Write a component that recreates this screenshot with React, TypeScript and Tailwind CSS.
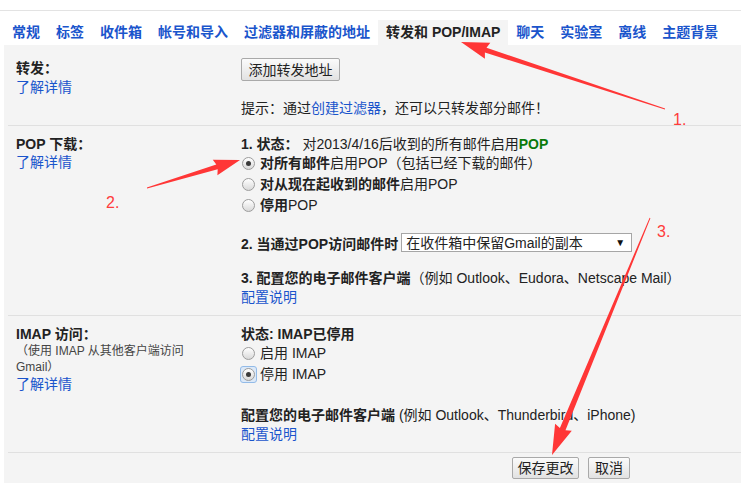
import React from "react";

function arrowPoints(x1: number, y1: number, x2: number, y2: number, neck: number, headW: number, headLen: number) {
  const dx = x2 - x1, dy = y2 - y1;
  const L = Math.sqrt(dx * dx + dy * dy);
  const ux = dx / L, uy = dy / L;
  const nx = -uy, ny = ux;
  const bx = x2 - ux * headLen, by = y2 - uy * headLen;
  const pts = [
    [x1 + nx * 0.4, y1 + ny * 0.4],
    [bx + (nx * neck) / 2, by + (ny * neck) / 2],
    [bx + (nx * headW) / 2 - ux * 2, by + (ny * headW) / 2 - uy * 2],
    [x2, y2],
    [bx - (nx * headW) / 2 - ux * 2, by - (ny * headW) / 2 - uy * 2],
    [bx - (nx * neck) / 2, by - (ny * neck) / 2],
    [x1 - nx * 0.4, y1 - ny * 0.4],
  ];
  return pts.map((p) => p[0].toFixed(1) + "," + p[1].toFixed(1)).join(" ");
}

function Radio({ checked }: { checked?: boolean }) {
  return (
    <span className="inline-flex w-[13px] h-[13px] rounded-full border border-[#9c9c9c] bg-gradient-to-b from-[#ffffff] to-[#d9d9d9] items-center justify-center shrink-0">
      {checked && <span className="w-[5px] h-[5px] rounded-full bg-[#3a3a3a]" />}
    </span>
  );
}

function Btn({ children, w, h }: { children: React.ReactNode; w: string; h: string }) {
  return (
    <div
      className={`${w} ${h} flex items-center justify-center rounded-[2px] border border-[#a9a9a9] bg-gradient-to-b from-[#fbfbfb] to-[#e2e2e2] text-[14px] text-[#222] leading-none`}
    >
      {children}
    </div>
  );
}

const Link = ({ children }: { children: React.ReactNode }) => <span className="text-[#1a55cc]">{children}</span>;

export default function App() {
  const tabs = ["常规", "标签", "收件箱", "帐号和导入", "过滤器和屏蔽的地址", "转发和 POP/IMAP", "聊天", "实验室", "离线", "主题背景"];
  return (
    <div className="relative w-[741px] h-[494px] overflow-hidden bg-white font-['Liberation_Sans','Noto_Sans_CJK_SC',sans-serif] text-[14px] text-[#222]">
      <div className="pt-[10px]">
        <div className="border-t border-[#e3e3e3]" />
        <div className="mt-[9px] flex h-[25px] pl-[4px]">
          {tabs.map((t, i) => (
            <div
              key={t}
              className={
                i === 5
                  ? "px-[8px] h-full flex items-center bg-[#f4f4f4] font-bold text-[#222] whitespace-nowrap"
                  : "px-[8px] h-full flex items-center font-bold text-[#1a55cc] whitespace-nowrap"
              }
            >
              {t}
            </div>
          ))}
        </div>
      </div>

      <div className="ml-[4px] w-[737px] h-[438px] bg-[#f4f4f4]">
        {/* 转发 */}
        <div className="flex h-[80px] pt-[13px]">
          <div className="w-[237px] pl-[12px]">
            <div className="leading-[20px] font-bold">转发：</div>
            <div className="leading-[18px]"><Link>了解详情</Link></div>
          </div>
          <div className="flex-1">
            <Btn w="w-[99px]" h="h-[23px]">添加转发地址</Btn>
            <div className="mt-[17px] leading-[20px]">
              提示：通过<Link>创建过滤器</Link>，还可以只转发部分邮件！
            </div>
          </div>
        </div>
        <div className="ml-[4px] border-t border-[#e0e0e0]" />

        {/* POP */}
        <div className="flex h-[189px] pt-[10px]">
          <div className="w-[237px] pl-[12px]">
            <div className="leading-[17px] font-bold">POP 下载：</div>
            <div className="leading-[18px]"><Link>了解详情</Link></div>
          </div>
          <div className="flex-1">
            <div className="leading-[17px] whitespace-nowrap">
              <span className="font-bold">1. 状态：</span> 对2013/4/16后收到的所有邮件启用<span className="font-bold text-[#0a7a0a]">POP</span>
            </div>
            <div className="flex items-center h-[21px] whitespace-nowrap">
              <span className="ml-[1px] mr-[5px] flex"><Radio checked /></span>
              <span className="font-bold">对所有邮件</span>启用POP（包括已经下载的邮件）
            </div>
            <div className="flex items-center h-[21px] whitespace-nowrap">
              <span className="ml-[1px] mr-[5px] flex"><Radio /></span>
              <span className="font-bold">对从现在起收到的邮件</span>启用POP
            </div>
            <div className="flex items-center h-[21px] whitespace-nowrap">
              <span className="ml-[1px] mr-[5px] flex"><Radio /></span>
              <span className="font-bold">停用</span>POP
            </div>
            <div className="mt-[17px] flex items-center h-[19px] whitespace-nowrap">
              <span className="font-bold mt-[3px]">2. 当通过POP访问邮件时</span>
              <div className="ml-[3px] w-[231px] h-[19px] bg-white border border-[#a6a6a6] flex items-center justify-between pl-[4px] pr-[6px]">
                <span className="leading-none">在收件箱中保留Gmail的副本</span>
                <span className="text-[10px] leading-none text-[#111]">▼</span>
              </div>
            </div>
            <div className="mt-[16px] leading-[20px] whitespace-nowrap">
              <span className="font-bold">3. 配置您的电子邮件客户端</span>（例如 Outlook、Eudora、Netscape Mail）
            </div>
            <div className="leading-[19px]"><Link>配置说明</Link></div>
          </div>
        </div>
        <div className="ml-[4px] border-t border-[#e0e0e0]" />

        {/* IMAP */}
        <div className="flex h-[136px] pt-[9px]">
          <div className="w-[237px] pl-[12px]">
            <div className="leading-[18px] font-bold">IMAP 访问：</div>
            <div className="leading-[16px] text-[12px] text-[#444]">（使用 IMAP 从其他客户端访问</div>
            <div className="leading-[16px] text-[12px] text-[#444]">Gmail）</div>
            <div className="leading-[18px]"><Link>了解详情</Link></div>
          </div>
          <div className="flex-1">
            <div className="leading-[18px] font-bold">状态: IMAP已停用</div>
            <div className="flex items-center h-[21px] whitespace-nowrap">
              <span className="ml-[1px] mr-[5px] flex"><Radio /></span>
              启用 IMAP
            </div>
            <div className="flex items-center h-[21px] whitespace-nowrap">
              <span className="-ml-[1px] mr-[3px] flex w-[17px] h-[17px] items-center justify-center rounded-[3px] border border-[#93bbe8] bg-[#dce9f8]">
                <Radio checked />
              </span>
              停用 IMAP
            </div>
            <div className="mt-[20px] leading-[20px] whitespace-nowrap">
              <span className="font-bold">配置您的电子邮件客户端</span> (例如 Outlook、Thunderbird、iPhone)
            </div>
            <div className="leading-[19px]"><Link>配置说明</Link></div>
          </div>
        </div>
        <div className="ml-[4px] border-t border-[#e0e0e0]" />

        <div className="flex gap-[9px] pt-[4px] pl-[508px]">
          <Btn w="w-[67px]" h="h-[22px]">保存更改</Btn>
          <Btn w="w-[42px]" h="h-[22px]">取消</Btn>
        </div>
      </div>

      {/* annotations */}
      <svg className="absolute left-0 top-0" width="741" height="494" viewBox="0 0 741 494">
        <polygon points={arrowPoints(665, 109, 461, 42, 5, 17, 26)} fill="#ff3636" />
        <polygon points={arrowPoints(147, 188, 240, 160, 5, 16, 24)} fill="#ff3636" />
        <polygon points={arrowPoints(650, 218, 552, 455, 6, 18, 28)} fill="#ff3636" />
      </svg>
      <div className="absolute left-[673px] top-[110px] text-[16px] leading-[20px] text-[#ff3b3b]">1.</div>
      <div className="absolute left-[106px] top-[193px] text-[16px] leading-[20px] text-[#ff3b3b]">2.</div>
      <div className="absolute left-[657px] top-[222px] text-[16px] leading-[20px] text-[#ff3b3b]">3.</div>
    </div>
  );
}
